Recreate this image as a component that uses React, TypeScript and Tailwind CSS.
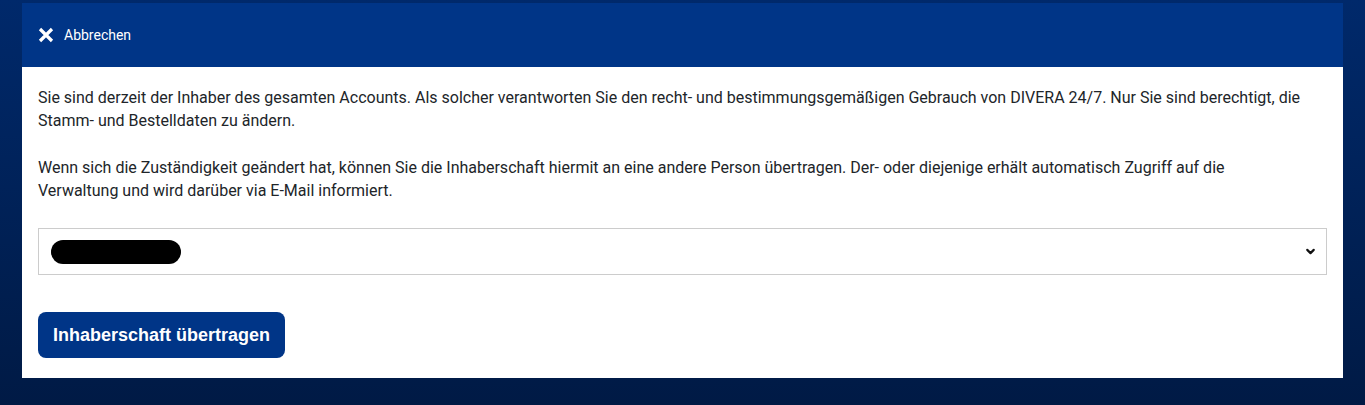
import { ChevronDown } from "lucide-react";

export default function App() {
  return (
    <div className="min-h-[405px] w-full bg-gradient-to-b from-[#00296b] to-[#001a45] px-[22px] pt-[3px] pb-[27px] font-['Roboto',sans-serif]">
      <div className="bg-white">
        <div className="flex h-16 items-center gap-[10px] bg-[#003587] px-4 text-white">
          <svg width="16" height="16" viewBox="0 0 16 16" fill="none" stroke="currentColor" strokeWidth="3.2">
            <path d="M2 2l12 12M14 2L2 14" />
          </svg>
          <span className="text-[14px]">Abbrechen</span>
        </div>

        <div className="px-4 pt-[19px] pb-5 text-[16px] leading-[23px] text-[#212529]">
          <p className="mb-6">
            Sie sind derzeit der Inhaber des gesamten Accounts. Als solcher verantworten Sie den recht- und
            bestimmungsgemäßigen Gebrauch von DIVERA 24/7. Nur Sie sind berechtigt, die Stamm- und Bestelldaten zu
            ändern.
          </p>
          <p className="pr-10">
            Wenn sich die Zuständigkeit geändert hat, können Sie die Inhaberschaft hiermit an eine andere Person
            übertragen. Der- oder diejenige erhält automatisch Zugriff auf die Verwaltung und wird darüber via E-Mail
            informiert.
          </p>

          <div className="mt-[26px] flex h-[47px] items-center justify-between border border-[#cccccc] pl-3 pr-[9px]">
            <div className="h-6 w-[130px] rounded-full bg-black" />
            <ChevronDown className="h-[13px] w-[13px] text-[#111]" strokeWidth={4} />
          </div>

          <button className="mt-[37px] h-[46px] rounded-lg bg-[#003587] px-[15px] font-['Liberation_Sans',Arial,sans-serif] text-[18px] font-bold text-white">
            Inhaberschaft übertragen
          </button>
        </div>
      </div>
    </div>
  );
}
